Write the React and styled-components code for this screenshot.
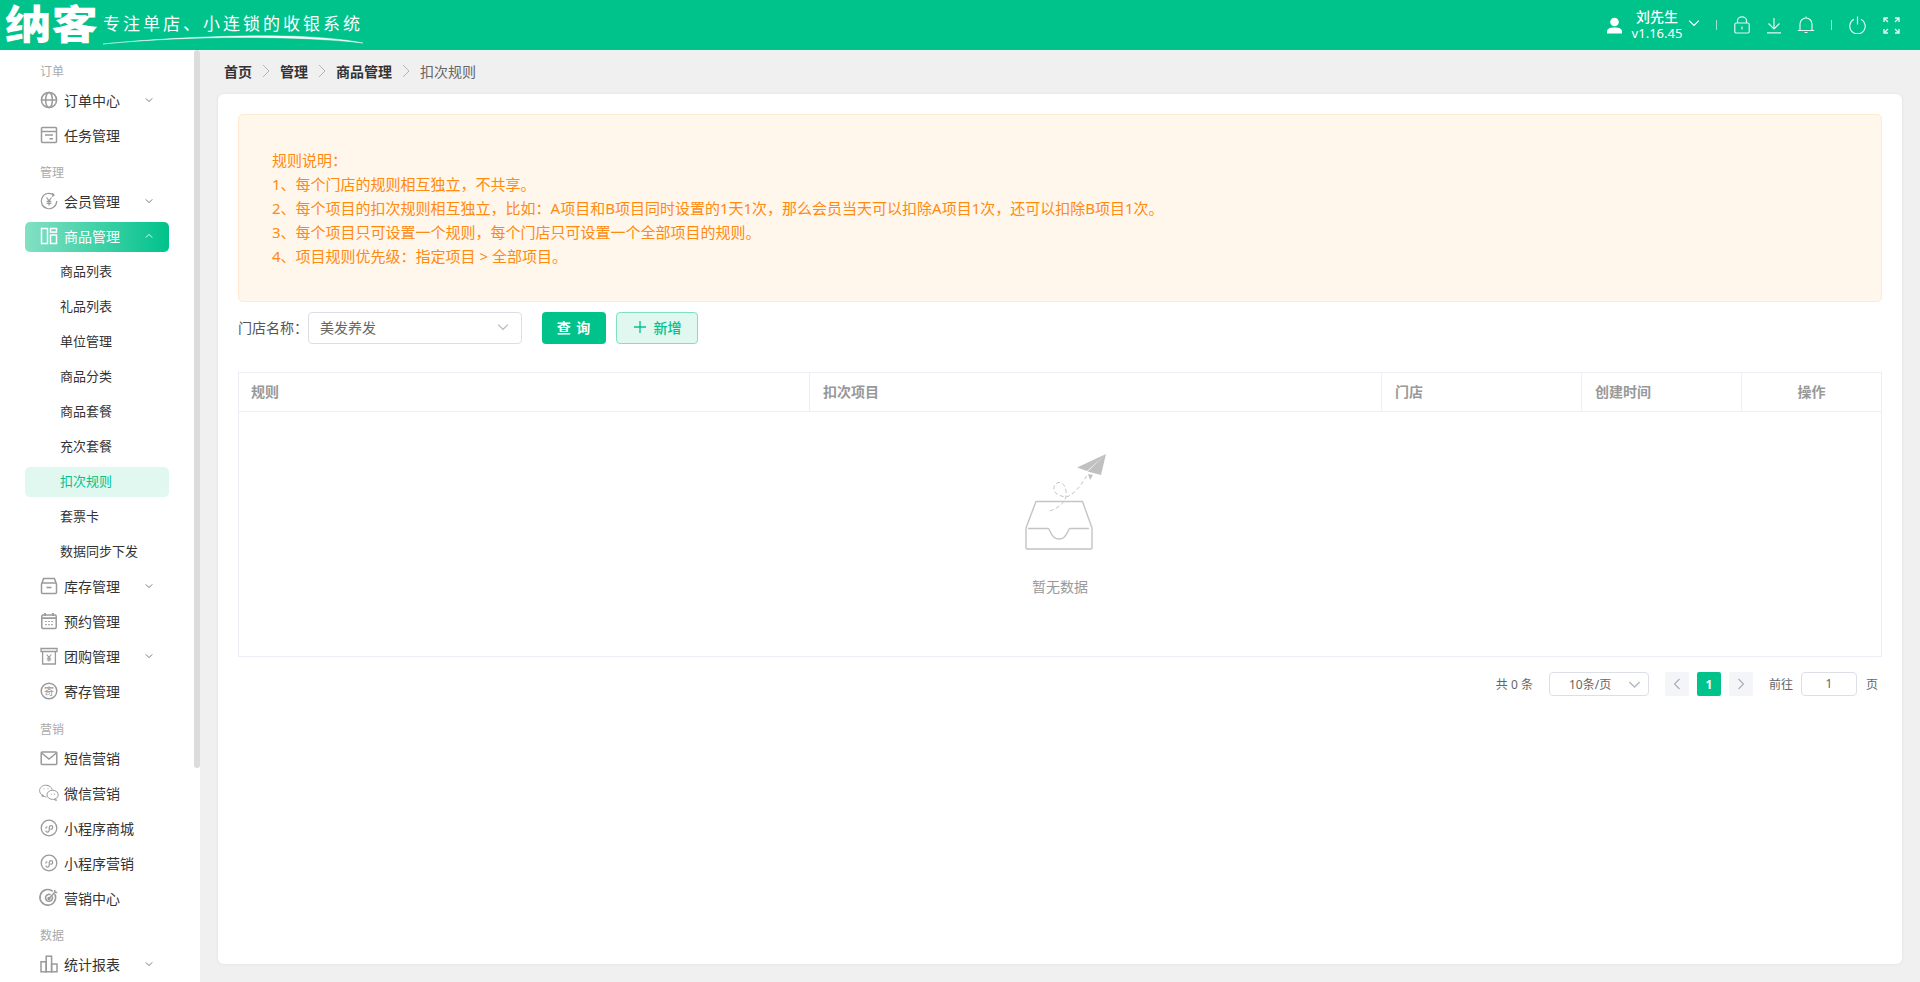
import React from 'react';
import styled, { createGlobalStyle } from 'styled-components';

const GREEN = '#00c28b';

const sidebarItems = [
  { label: '订单' },
  { name: '订单中心', icon: 'globe', arrow: 'down' },
  { name: '任务管理', icon: 'task' },
  { label: '管理' },
  { name: '会员管理', icon: 'member', arrow: 'down' },
  { name: '商品管理', icon: 'goods', arrow: 'up', open: true },
  { sub: '商品列表' },
  { sub: '礼品列表' },
  { sub: '单位管理' },
  { sub: '商品分类' },
  { sub: '商品套餐' },
  { sub: '充次套餐' },
  { sub: '扣次规则', current: true },
  { sub: '套票卡' },
  { sub: '数据同步下发' },
  { name: '库存管理', icon: 'stock', arrow: 'down' },
  { name: '预约管理', icon: 'calendar' },
  { name: '团购管理', icon: 'group', arrow: 'down' },
  { name: '寄存管理', icon: 'deposit' },
  { label: '营销' },
  { name: '短信营销', icon: 'mail' },
  { name: '微信营销', icon: 'wechat' },
  { name: '小程序商城', icon: 'mini' },
  { name: '小程序营销', icon: 'mini' },
  { name: '营销中心', icon: 'target' },
  { label: '数据' },
  { name: '统计报表', icon: 'chart', arrow: 'down' },
];

const rules = [
  '规则说明\uFF1A',
  '1、每个门店的规则相互独立\uFF0C不共享。',
  '2、每个项目的扣次规则相互独立\uFF0C比如\uFF1AA项目和B项目同时设置的1天1次\uFF0C那么会员当天可以扣除A项目1次\uFF0C还可以扣除B项目1次。',
  '3、每个项目只可设置一个规则\uFF0C每个门店只可设置一个全部项目的规则。',
  '4、项目规则优先级\uFF1A指定项目 > 全部项目。',
];

const columns = [
  { title: '规则', width: 572 },
  { title: '扣次项目', width: 572 },
  { title: '门店', width: 200 },
  { title: '创建时间', width: 160 },
  { title: '操作', width: 140, center: true },
];

const MenuIcon = ({ type, color = '#9a9a9a' }) => {
  const paths = {
    globe: (
      <>
        <circle cx="9" cy="9" r="7.6" />
        <ellipse cx="9" cy="9" rx="3.4" ry="7.6" />
        <path d="M1.4 9h15.2" />
      </>
    ),
    task: (
      <>
        <rect x="1.5" y="1.5" width="15" height="15" rx="1" />
        <path d="M1.5 5.6h15M5 9h8M9.5 12.8h3.5" />
      </>
    ),
    member: (
      <>
        <path d="M13.8 3A7.7 7.7 0 1 0 16.7 9" strokeWidth="1.2" />
        <path d="M12.4 1.2l1.6 1.9-2 1.5" strokeWidth="1.2" />
        <path d="M6.500 5.500L9 8.800l2.500-3.300M9 8.800v4.600M6.600 9.400h4.800M6.600 11.400h4.800" strokeWidth="1.2" />
      </>
    ),
    goods: (
      <>
        <rect x="1.5" y="1.5" width="6" height="15" />
        <rect x="10.5" y="1.5" width="6" height="3.6" />
        <rect x="10.5" y="8" width="6" height="8.5" />
      </>
    ),
    stock: (
      <>
        <path d="M2 6l1.6-4.400h10.800L16 6" />
        <rect x="1.5" y="6" width="15" height="10.500" rx="1" />
        <path d="M6.500 10.500h5" strokeWidth="1.6" />
      </>
    ),
    calendar: (
      <>
        <rect x="1.8" y="3" width="14.400" height="13.500" rx="1.2" />
        <path d="M1.8 6.200h14.400M5 1v3M13 1v3" strokeWidth="1.8" />
        <path d="M5.200 9.500h1.600M8.200 9.500h1.600M11.200 9.500h1.600M5.200 12.600h1.600M8.200 12.600h1.600M11.200 12.600h1.600" strokeWidth="1.2" />
      </>
    ),
    group: (
      <>
        <path d="M1 1.500h16v3H1zM2.600 4.500v12.500h12.800V4.500" strokeWidth="1.3" />
        <path d="M6.600 7.500L9 10.400l2.400-2.900M9 10.400v4M6.800 11.200h4.400M6.800 13h4.400" strokeWidth="1.1" />
      </>
    ),
    deposit: (
      <>
        <circle cx="9" cy="9" r="7.800" />
        <IconGlyph x="9" y="12.600" fill={color} stroke="none">寄</IconGlyph>
      </>
    ),
    mail: (
      <>
        <rect x="1.2" y="3" width="15.600" height="12.400" rx="1" />
        <path d="M1.600 4l7.400 6 7.400-6" />
      </>
    ),
    wechat: (
      <>
        <path d="M6.500 13C3.500 12.800-.400 10.400-.400 6.500-.400 3.400 2.800 1.200 5.800 1.200c3 0 5.800 1.700 6.500 4.400" strokeWidth="1" />
        <path d="M2.400 10.600l-.4 1.800 2-1" strokeWidth="1" />
        <ellipse cx="12.600" cy="10.800" rx="5.600" ry="4.600" strokeWidth="1" />
        <path d="M15.600 14.600l.8 2-2.400-1.200" strokeWidth="1" />
        <path d="M3.500 4.800h.9M7.500 4.800h.9M10.800 10.200h.9M14 10.200h.9" strokeWidth="1" />
      </>
    ),
    mini: (
      <>
        <circle cx="9" cy="9" r="7.800" strokeWidth="1.300" />
        <path d="M5.800 11.400c0 2 2.800 2.400 3.400.2l.1-3.400c.5-2.400 3.600-1.900 3.400.2-.1 1.400-1.400 2-2.400 1.700M7.400 8c-1-.2-1.600.5-1.600 1.400" strokeWidth="1.200" />
      </>
    ),
    target: (
      <>
        <path d="M14.800 5a7.800 7.800 0 1 1-2-2.600" strokeWidth="1.600" />
        <path d="M12.200 7.400a3.500 3.500 0 1 1-1.600-1.700" strokeWidth="1.600" />
        <circle cx="9" cy="9.400" r="1" fill={color} />
        <path d="M9 9.400L15.600 2.600M14.600 1l.4 2.200 2.200.3" />
      </>
    ),
    chart: (
      <>
        <rect x="1" y="6.800" width="5.200" height="10" />
        <rect x="6.200" y="1.200" width="5.400" height="15.600" />
        <rect x="11.600" y="9" width="5.400" height="7.800" />
      </>
    ),
  };
  return (
    <IconSvg viewBox="0 0 18 18" fill="none" stroke={color} strokeWidth="1.500">
      {paths[type]}
    </IconSvg>
  );
};

const Chevron = ({ up, size = 8, color = '#666' }) => (
  <svg width={size} height={size} viewBox="0 0 10 10" fill="none" stroke={color} strokeWidth="1.100">
    <path d={up ? 'M1 7l4-4 4 4' : 'M1 3l4 4 4-4'} />
  </svg>
);

const BreadSep = () => (
  <svg width="8" height="14" viewBox="0 0 8 14" fill="none" stroke="#b5b5b5" strokeWidth="1">
    <path d="M1 1l6 6-6 6" />
  </svg>
);

const EmptyPicture = () => (
  <svg width="100" height="102" viewBox="50 20 100 102" fill="none" stroke="#c4c4c4" strokeWidth="1.400" strokeLinejoin="round">
    <path d="M76 70.500h46.500L132 97v20a1 1 0 0 1-1 1H67a1 1 0 0 1-1-1V97z" />
    <path d="M68 97.500h20c2.500 0 2.200 10.500 11 10.500s8.500-10.500 11-10.500h19" />
    <path d="M90 80C98 77 105 72 106 65C107 58 104 52 100 51.500C96 51 93 55 94 59C95 63 100 65 105 66C112 66 122 54 127 44" strokeWidth="1" strokeDasharray="4 2.500" />
    <path d="M146 23l-29 13.500 10 3.500zM146 23l-18.500 17.500 13.500 3.500z" fill="#c0c0c0" stroke="none" />
    <path d="M128 43l2 6 3-5z" fill="#c0c0c0" stroke="none" />
  </svg>
);

export default function App() {
  return (
    <>
      <GlobalStyle />
      <Page>
        <TopBar>
          <Logo>
            <LogoMark>纳客</LogoMark>
            <Slogan>
              专注单店、小连锁的收银系统
              <Swoosh viewBox="0 0 260 10" preserveAspectRatio="none">
                <path d="M0 9C60 3 130 0 180 1c30 .5 60 3 80 7C225 4 180 2.500 140 2.500 90 2.500 40 5 0 9z" fill="#fff" stroke="#fff" strokeWidth=".4" />
              </Swoosh>
            </Slogan>
          </Logo>
          <TopRight>
            <svg width="17" height="17" viewBox="0 0 17 17" fill="#fff">
              <circle cx="8.500" cy="5" r="4.300" />
              <path d="M1 16.500v-2c0-2.500 2.500-4 7.500-4s7.500 1.500 7.500 4v2z" />
            </svg>
            <UserInfo>
              <UserName>刘先生</UserName>
              <Version>v1.16.45</Version>
            </UserInfo>
            <ChevronSlot>
              <Chevron size={12} color="#fff" />
            </ChevronSlot>
            <TopDivider />
            <TopTools>
              <svg width="16" height="18" viewBox="0 0 16 18" fill="none" stroke="#dff7ef" strokeWidth="1.200">
                <rect x=".8" y="7" width="14.400" height="10" rx="1.500" />
                <path d="M3.500 7V4.500a4.500 3.700 0 0 1 9 0V7M8 10.500v3" />
              </svg>
              <svg width="16" height="17" viewBox="0 0 16 17" fill="none" stroke="#dff7ef" strokeWidth="1.200">
                <path d="M8 1v10.500M2.500 6.500L8 12l5.500-5.500M1 15.800h14" />
              </svg>
              <svg width="18" height="18" viewBox="0 0 18 18" fill="none" stroke="#dff7ef" strokeWidth="1.200">
                <path d="M3 14.500V8a6 6 0 0 1 12 0v6.500M.8 14.500h16.400" />
                <path d="M9 .4v1.400M7.500 16.500h3" />
              </svg>
            </TopTools>
            <TopDivider />
            <svg width="17" height="18" viewBox="0 0 17 18" fill="none" stroke="#dff7ef" strokeWidth="1.200">
              <path d="M5 3.300a7.700 7.700 0 1 0 7 0M8.500 .5v8" />
            </svg>
            <FullscreenSlot>
              <svg width="17" height="17" viewBox="0 0 17 17" fill="none" stroke="#dff7ef" strokeWidth="1.400">
                <path d="M1 5V1h4M1 1l4 4M16 5V1h-4M16 1l-4 4M1 12v4h4M1 16l4-4M16 12v4h-4M16 16l-4-4" />
              </svg>
            </FullscreenSlot>
          </TopRight>
        </TopBar>

        <Body>
          <Sidebar>
            <Nav>
              {sidebarItems.map((item, idx) => {
                if (item.label) return <GroupLabel key={idx}>{item.label}</GroupLabel>;
                if (item.sub) return <SubRow key={idx} $current={item.current}>{item.sub}</SubRow>;
                return (
                  <MenuRow key={idx} $open={item.open}>
                    <MenuIcon type={item.icon} color={item.open ? '#fff' : '#9a9a9a'} />
                    <MenuText>{item.name}</MenuText>
                    {item.arrow && <Chevron up={item.arrow === 'up'} color={item.open ? '#fff' : '#666'} />}
                  </MenuRow>
                );
              })}
            </Nav>
            <ScrollThumb />
          </Sidebar>

          <Main>
            <Breadcrumb>
              <Crumb>首页</Crumb>
              <BreadSep />
              <Crumb>管理</Crumb>
              <BreadSep />
              <Crumb>商品管理</Crumb>
              <BreadSep />
              <Crumb $last>扣次规则</Crumb>
            </Breadcrumb>

            <Card>
              <Notice>
                {rules.map((line) => (
                  <div key={line}>{line}</div>
                ))}
              </Notice>

              <FilterRow>
                <FilterLabel>门店名称{'\uFF1A'}</FilterLabel>
                <ShopSelect>
                  美发养发
                  <Chevron size={12} color="#b4b8c0" />
                </ShopSelect>
                <QueryButton>查 询</QueryButton>
                <AddButton>
                  <svg width="14" height="14" viewBox="0 0 14 14" stroke={GREEN} strokeWidth="1.300">
                    <path d="M7 1v12M1 7h12" />
                  </svg>
                  新增
                </AddButton>
              </FilterRow>

              <Table>
                <TableHead>
                  {columns.map((col) => (
                    <HeadCell key={col.title} $width={col.width} $center={col.center}>
                      {col.title}
                    </HeadCell>
                  ))}
                </TableHead>
                <EmptyBody>
                  <EmptyPicture />
                  <EmptyText>暂无数据</EmptyText>
                </EmptyBody>
              </Table>

              <Pager>
                <PagerText>共 0 条</PagerText>
                <PageSize>
                  10条/页
                  <Chevron size={13} color="#b4b8c0" />
                </PageSize>
                <PageButtons>
                  <PageButton>
                    <svg width="8" height="12" viewBox="0 0 8 12" fill="none" stroke="#a8abb2" strokeWidth="1.100"><path d="M6.500 1L1.500 6l5 5" /></svg>
                  </PageButton>
                  <PageButton $active>1</PageButton>
                  <PageButton>
                    <svg width="8" height="12" viewBox="0 0 8 12" fill="none" stroke="#a8abb2" strokeWidth="1.100"><path d="M1.500 1l5 5-5 5" /></svg>
                  </PageButton>
                </PageButtons>
                <JumpText>前往</JumpText>
                <JumpInput>1</JumpInput>
                <JumpEnd>页</JumpEnd>
              </Pager>
            </Card>
          </Main>
        </Body>
      </Page>
    </>
  );
}

const GlobalStyle = createGlobalStyle`
  html, body {
    margin: 0;
    height: 100%;
    overflow: hidden;
  }
  body {
    font-family: "Noto Sans", "Noto Sans CJK SC", sans-serif;
    color: #333;
  }
  * {
    box-sizing: border-box;
  }
`;

const Page = styled.div`
  display: flex;
  flex-direction: column;
  height: 982px;
  background: #f0f0f0;
`;

const TopBar = styled.header`
  display: flex;
  align-items: center;
  justify-content: space-between;
  flex: none;
  height: 50px;
  background: ${GREEN};
  color: #fff;
`;

const Logo = styled.div`
  display: flex;
  align-items: center;
  padding-left: 5px;
`;

const LogoMark = styled.div`
  width: 98px;
  height: 50px;
  font-family: "Liberation Sans", "Noto Sans CJK SC", sans-serif;
  font-size: 40px;
  font-weight: 900;
  line-height: 50px;
  white-space: nowrap;
  transform: scaleX(1.16);
  transform-origin: left center;
`;

const Slogan = styled.div`
  position: relative;
  width: 262px;
  padding-top: 2px;
  padding-bottom: 6px;
  font-family: "Noto Sans CJK SC", sans-serif;
  font-size: 17px;
  font-weight: 400;
  line-height: 24px;
  letter-spacing: 3px;
  white-space: nowrap;
`;

const Swoosh = styled.svg`
  position: absolute;
  left: 0;
  bottom: -4px;
  width: 260px;
  height: 10px;
`;

const TopRight = styled.div`
  display: flex;
  align-items: center;
  padding-right: 20px;
`;

const UserInfo = styled.div`
  display: flex;
  flex-direction: column;
  align-items: center;
  width: 52px;
  margin-left: 8px;
  line-height: 16px;
`;

const UserName = styled.span`
  font-size: 14px;
  font-weight: 500;
`;

const Version = styled.span`
  font-size: 13px;
`;

const ChevronSlot = styled.span`
  display: flex;
  margin-left: 5px;
  margin-bottom: 4px;
`;

const TopDivider = styled.span`
  width: 1px;
  height: 10px;
  margin: 0 17px 0 16px;
  background: rgba(255, 255, 255, 0.6);
`;

const TopTools = styled.div`
  display: flex;
  align-items: center;
  gap: 15.5px;
`;

const FullscreenSlot = styled.span`
  display: flex;
  margin-left: 17px;
`;

const Body = styled.div`
  display: flex;
  flex: 1;
  min-height: 0;
`;

const Sidebar = styled.aside`
  position: relative;
  flex: none;
  width: 200px;
  overflow: hidden;
  background: #fff;
`;

const ScrollThumb = styled.div`
  position: absolute;
  top: 0;
  right: 0;
  width: 6px;
  height: 718px;
  border-radius: 3px;
  background: #dcdcdc;
`;

const Nav = styled.nav`
  display: flex;
  flex-direction: column;
  padding: 4px 0 0 25px;
`;

const GroupLabel = styled.div`
  flex: none;
  height: 31.5px;
  padding: 2.5px 0 0 15px;
  font-size: 12px;
  line-height: 29px;
  color: #aaa;
`;

const MenuRow = styled.div`
  display: flex;
  align-items: center;
  flex: none;
  width: 144px;
  height: 30px;
  margin-bottom: 5px;
  padding: 0 16px 2px 15px;
  border-radius: 5px;
  font-size: 14px;
  color: ${(props) => (props.$open ? '#fff' : '#333')};
  background: ${(props) => (props.$open ? `linear-gradient(90deg, #83e0c3, ${GREEN})` : 'transparent')};
`;

const IconSvg = styled.svg`
  flex: none;
  width: 18px;
  height: 18px;
  overflow: visible;
`;

const IconGlyph = styled.text`
  font-family: "Noto Sans CJK SC", sans-serif;
  font-size: 10px;
  text-anchor: middle;
`;

const MenuText = styled.span`
  flex: 1;
  margin-left: 6px;
  white-space: nowrap;
`;

const SubRow = styled.div`
  flex: none;
  width: 144px;
  height: 30px;
  margin-bottom: 5px;
  padding-left: 35px;
  border-radius: 5px;
  font-size: 13px;
  line-height: 28px;
  color: ${(props) => (props.$current ? GREEN : '#333')};
  background: ${(props) => (props.$current ? '#e1f8f0' : 'transparent')};
`;

const Main = styled.main`
  display: flex;
  flex-direction: column;
  flex: 1;
  min-width: 0;
`;

const Breadcrumb = styled.div`
  display: flex;
  align-items: center;
  flex: none;
  gap: 10px;
  height: 44px;
  padding: 0 0 2px 24px;
`;

const Crumb = styled.span`
  font-size: 14px;
  font-weight: ${(props) => (props.$last ? 400 : 700)};
  color: ${(props) => (props.$last ? '#666' : '#333')};
`;

const Card = styled.section`
  flex: 1;
  margin: 0 18px 18px 18px;
  padding: 20px;
  border-radius: 6px;
  background: #fff;
  box-shadow: 0 0 4px rgba(0, 0, 0, 0.06);
`;

const Notice = styled.div`
  height: 188px;
  padding: 33px;
  border: 1px solid #ffe9cf;
  border-radius: 5px;
  background: #fff6ec;
  font-size: 15px;
  line-height: 24px;
  color: #ff8a10;
`;

const FilterRow = styled.div`
  display: flex;
  align-items: center;
  height: 32px;
  margin-top: 10px;
`;

const FilterLabel = styled.label`
  width: 70px;
  padding-bottom: 2px;
  font-size: 14px;
  color: #555;
`;

const ShopSelect = styled.div`
  display: flex;
  align-items: center;
  justify-content: space-between;
  width: 214px;
  height: 32px;
  padding: 0 12px 2px 11px;
  border: 1px solid #dcdfe6;
  border-radius: 4px;
  font-size: 14px;
  color: #666;
`;

const QueryButton = styled.button`
  width: 64px;
  height: 32px;
  margin-left: 20px;
  padding: 0 0 2px;
  border: 0;
  border-radius: 4px;
  background: ${GREEN};
  font-family: inherit;
  font-size: 14px;
  font-weight: 700;
  letter-spacing: 1px;
  color: #fff;
`;

const AddButton = styled.button`
  display: flex;
  align-items: center;
  justify-content: center;
  gap: 7px;
  width: 82px;
  height: 32px;
  margin-left: 10px;
  padding: 0 0 2px;
  border: 1px solid #80e0c4;
  border-radius: 4px;
  background: #e1f8f0;
  font-family: inherit;
  font-size: 14px;
  font-weight: 500;
  color: ${GREEN};
`;

const Table = styled.div`
  margin-top: 28px;
  border: 1px solid #ebeef5;
`;

const TableHead = styled.div`
  display: flex;
  height: 39px;
  margin: 0 -1px;
  border-bottom: 1px solid #ebeef5;
`;

const HeadCell = styled.div`
  flex: none;
  width: ${(props) => props.$width}px;
  padding: 0 13px;
  border-right: 1px solid #ebeef5;
  font-size: 14px;
  font-weight: 700;
  line-height: 38px;
  text-align: ${(props) => (props.$center ? 'center' : 'left')};
  color: #999;
`;

const EmptyBody = styled.div`
  display: flex;
  flex-direction: column;
  align-items: center;
  height: 244px;
  padding-top: 39px;
`;

const EmptyText = styled.div`
  margin-top: 23px;
  font-size: 14px;
  color: #999;
`;

const Pager = styled.div`
  display: flex;
  align-items: center;
  justify-content: flex-end;
  height: 24px;
  margin-top: 15px;
  padding-right: 4px;
  font-size: 12px;
  color: #666;
`;

const PagerText = styled.span`
  white-space: pre;
`;

const PageSize = styled.div`
  display: flex;
  align-items: center;
  justify-content: space-between;
  width: 100px;
  height: 24px;
  margin-left: 16px;
  padding: 0 7px 0 19px;
  border: 1px solid #dcdfe6;
  border-radius: 4px;
`;

const PageButtons = styled.div`
  display: flex;
  gap: 8px;
  margin-left: 16px;
`;

const PageButton = styled.div`
  display: flex;
  align-items: center;
  justify-content: center;
  width: 24px;
  height: 24px;
  border-radius: 2px;
  background: ${(props) => (props.$active ? GREEN : '#f4f5f8')};
  font-weight: 700;
  color: #fff;
`;

const JumpText = styled.span`
  margin-left: 16px;
`;

const JumpInput = styled.div`
  width: 56px;
  height: 24px;
  margin-left: 8px;
  border: 1px solid #dcdfe6;
  border-radius: 4px;
  line-height: 22px;
  text-align: center;
`;

const JumpEnd = styled.span`
  margin-left: 9px;
`;
